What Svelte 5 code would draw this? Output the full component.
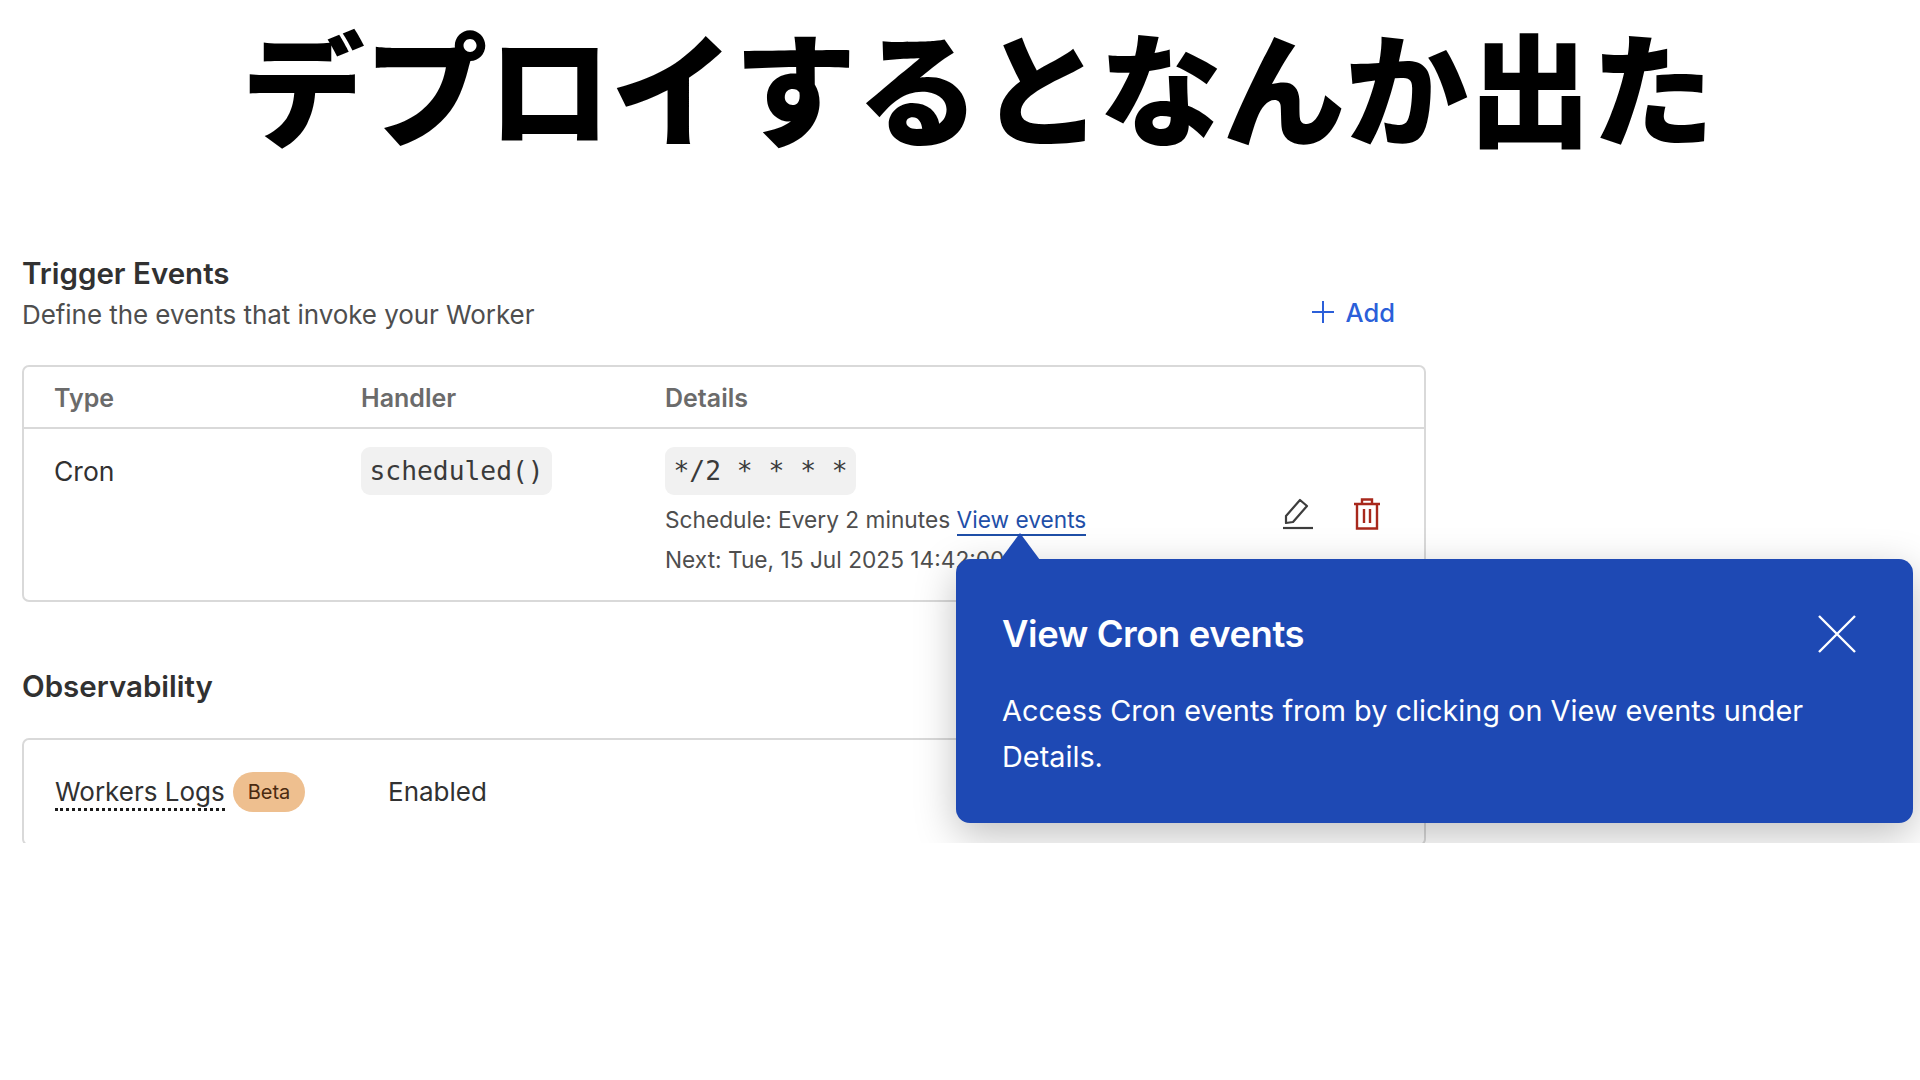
<script lang="ts">
  let popoverOpen = $state(true);
</script>

<main class="page">
  <h1 class="title">デプロイするとなんか出た</h1>

  <div class="panel">
    <section class="triggers">
      <header class="section-head">
        <div>
          <h2>Trigger Events</h2>
          <p class="sub">Define the events that invoke your Worker</p>
        </div>
        <button class="add" type="button">
          <svg width="24" height="24" viewBox="0 0 24 24" fill="none" stroke="currentColor" stroke-width="2">
            <path d="M12 1v22M1 12h22" />
          </svg>
          Add
        </button>
      </header>

      <div class="card">
        <div class="row head">
          <span>Type</span>
          <span>Handler</span>
          <span>Details</span>
        </div>
        <div class="row body">
          <span class="type">Cron</span>
          <span><code>scheduled()</code></span>
          <div class="details">
            <code>*/2 * * * *</code>
            <p class="meta first">Schedule: Every 2 minutes <a href="#events">View events</a></p>
            <p class="meta">Next: Tue, 15 Jul 2025 14:42:00</p>
          </div>
          <div class="actions">
            <svg class="pen" width="30" height="32" viewBox="0 0 30 32" fill="none" stroke="currentColor" stroke-width="2.2">
              <path d="M3 25v-7L17 2l7 6L10 24z" stroke-linejoin="round" />
              <path d="M0 30h30" />
            </svg>
            <svg class="trash" width="28" height="32" viewBox="0 0 28 32" fill="none" stroke="currentColor" stroke-width="2.4">
              <path d="M1 6h26M9 6V1.500h10V6M4 6v24.500h20V6M11 11v14M17 11v14" />
            </svg>
          </div>
        </div>
      </div>
    </section>

    <section class="observability">
      <h2>Observability</h2>
      <div class="card logs">
        <span class="logs-name">
          <span class="dotted">Workers Logs</span>
          <span class="beta">Beta</span>
        </span>
        <span class="enabled">Enabled</span>
      </div>
    </section>

    {#if popoverOpen}
      <aside class="popover">
        <span class="arrow"></span>
        <div class="pop-head">
          <h3>View Cron events</h3>
          <button class="close" type="button" aria-label="Close" onclick={() => (popoverOpen = false)}>
            <svg width="38" height="38" viewBox="0 0 38 38" fill="none" stroke="currentColor" stroke-width="2.4">
              <path d="M1 1l36 36M37 1L1 37" />
            </svg>
          </button>
        </div>
        <p>Access Cron events from by clicking on View events under Details.</p>
      </aside>
    {/if}
  </div>
</main>

<style>
  :global(body) {
    margin: 0;
    background: #fff;
  }

  .page {
    width: 1920px;
    height: 1080px;
    overflow: hidden;
    font-family: Inter, "Noto Sans", sans-serif;
    color: #313131;
  }

  .title {
    margin: 0;
    height: 180px;
    padding-left: 36px;
    text-align: center;
    font-family: Inter, "Noto Sans CJK JP", sans-serif;
    font-size: 123px;
    font-weight: 900;
    line-height: 186px;
    color: #000;
    white-space: nowrap;
  }

  .panel {
    position: relative;
    height: 663px;
    padding: 75px 0 0 22px;
    box-sizing: border-box;
    overflow: hidden;
  }

  .triggers,
  .observability {
    width: 1404px;
  }

  .section-head {
    display: flex;
    justify-content: space-between;
    height: 110px;
  }

  h2 {
    margin: 0;
    font-size: 29.500px;
    font-weight: 600;
    line-height: 36px;
  }

  .sub {
    margin: 7px 0 0;
    font-size: 26px;
    line-height: 34px;
    letter-spacing: -0.06px;
    color: #4e4e4e;
  }

  .add {
    display: flex;
    align-items: center;
    gap: 11px;
    height: 40px;
    margin: 37px 31px 0 0;
    padding: 0;
    border: 0;
    background: none;
    font: 500 25.500px Inter, sans-serif;
    color: #2b5fd9;
  }

  .card {
    border: 2px solid #d9d9d9;
    border-radius: 7px;
    box-sizing: border-box;
    background: #fff;
  }

  .row {
    display: grid;
    grid-template-columns: 307px 304px 1fr auto;
    padding: 0 30px;
  }

  .row.head {
    align-items: center;
    height: 59px;
    padding-top: 1px;
    border-bottom: 2px solid #d9d9d9;
    font-size: 25px;
    font-weight: 600;
    color: #6b6b6b;
  }

  .row.body {
    height: 171px;
    padding-top: 18px;
    box-sizing: border-box;
  }

  .type {
    padding-top: 6px;
    font-size: 26.500px;
    line-height: 36px;
  }

  code {
    display: inline-block;
    padding: 0 8.500px;
    height: 48px;
    border-radius: 9px;
    background: #f1f1f1;
    font-family: "DejaVu Sans Mono", monospace;
    font-size: 26.300px;
    line-height: 48px;
    color: #3a3a3a;
  }

  .meta {
    margin: 0;
    font-size: 22.700px;
    line-height: 40px;
    color: #4e4e4e;
    white-space: nowrap;
  }

  .meta.first {
    margin-top: 5px;
  }

  a {
    color: #1f4fa8;
    text-decoration: none;
    border-bottom: 2px solid #1f4fa8;
    padding-bottom: 1px;
  }

  .actions {
    display: flex;
    align-items: flex-start;
    gap: 40px;
    padding: 51px 13px 0 0;
  }

  .pen {
    color: #3d3d3d;
  }

  .trash {
    color: #a8281c;
  }

  .observability {
    margin-top: 66px;
  }

  .logs {
    display: flex;
    align-items: center;
    height: 108px;
    margin-top: 34px;
    padding: 0 30px 0 31px;
  }

  .logs-name {
    display: flex;
    align-items: center;
    gap: 8px;
    width: 333px;
    font-size: 26px;
  }

  .dotted {
    margin-top: 2px;
    border-bottom: 3px dotted #1c1c1c;
    line-height: 32px;
  }

  .beta {
    padding: 0 15px;
    height: 40px;
    border-radius: 20px;
    background: #eebf8f;
    font-size: 20px;
    line-height: 40px;
    color: #4a2a10;
  }

  .enabled {
    margin-bottom: 2px;
    font-size: 26px;
  }

  .popover {
    position: absolute;
    left: 956px;
    top: 379px;
    width: 957px;
    height: 264px;
    padding: 0 57px 0 46px;
    box-sizing: border-box;
    border-radius: 14px;
    background: #1e49b4;
    color: #fff;
    box-shadow: 0 12px 40px rgba(0, 0, 0, 0.25);
  }

  .arrow {
    position: absolute;
    left: 44px;
    top: -26px;
    border-left: 20px solid transparent;
    border-right: 20px solid transparent;
    border-bottom: 27px solid #1e49b4;
  }

  .pop-head {
    display: flex;
    align-items: center;
    justify-content: space-between;
    height: 150px;
  }

  h3 {
    margin: 0;
    font-size: 36.400px;
    font-weight: 600;
    letter-spacing: -0.4px;
  }

  .close {
    display: flex;
    padding: 0;
    border: 0;
    background: none;
    color: #fff;
  }

  .popover p {
    margin: 0;
    font-size: 28.850px;
    line-height: 45.500px;
    margin-top: -21px;
  }
</style>
